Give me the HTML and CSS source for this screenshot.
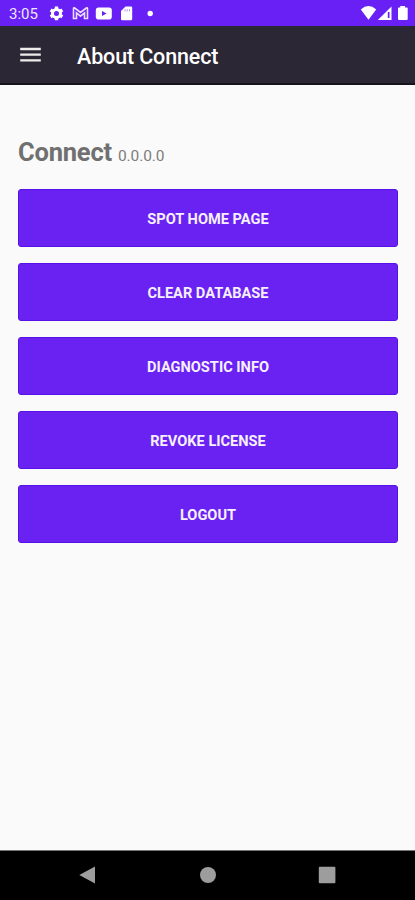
FILE: index.html
```html
<!DOCTYPE html>
<html lang="en">
<head>
<meta charset="utf-8">
<title>About Connect</title>
<link rel="stylesheet" href="styles.css">
</head>
<body>
<div class="status">
  <span class="time">3:05</span>
  <svg class="status-icons" width="106" height="16" viewBox="0 0 106 16" fill="#fff">
    <g transform="translate(7.5 8.4)">
      <circle r="4" fill="none" stroke="#fff" stroke-width="3"/>
      <path d="M0-6.8V-4M0 6.8V4M5.9-3.4 3.5-2M-5.9 3.4-3.5 2M5.9 3.4 3.5 2M-5.9-3.4-3.5-2" stroke="#fff" stroke-width="3.4"/>
    </g>
    <path d="M24.5 13.5V3.5Q24.5 2.3 25.7 3L31.5 7.5 37.3 3Q38.5 2.3 38.5 3.5V13.5H35.5V8L31.5 11.2 27.5 8V13.5Z" fill="none" stroke="#eadcff" stroke-width="1.6"/>
    <rect x="46.8" y="2.6" width="16" height="12" rx="2.8"/>
    <path d="M53 5.9 57.6 8.5 53 11.1Z" fill="#6820f4"/>
    <path d="M76.5 1.5H82Q83.2 1.5 83.2 2.7V14Q83.2 15.2 82 15.2H73.2Q72 15.2 72 14V6Z"/>
    <path d="M76 4V6.5M78.2 4V6.5M80.5 4V6.5" stroke="#b999f8" stroke-width="1"/>
    <circle cx="101.2" cy="8.5" r="2.7"/>
  </svg>
  <svg class="signals" width="50" height="16" viewBox="0 0 50 16" fill="#fff">
    <path d="M.8 4.4Q8.5-2.2 16.2 4.4L8.5 14.8Z"/>
    <path d="M17.8 15 31.5 1.5V15Z"/>
    <path d="M27.8 7V13H29.5V7Z" fill="#6820f4"/>
    <path d="M40.3 1H45V2.5H47Q47.7 2.5 47.7 3.3V14Q47.7 15 46.7 15H39Q38 15 38 14V3.3Q38 2.5 38.7 2.5H40.3Z"/>
  </svg>
</div>
<header class="appbar">
  <svg class="menu" width="22" height="16" viewBox="0 0 22 16"><path d="M.2 2H20.8M.2 7.7H20.8M.2 13.4H20.8" stroke="#eeede9" stroke-width="2.3"/></svg>
  <h1 class="title">About Connect</h1>
</header>
<main class="content">
  <div class="product"><span class="name">Connect</span><span class="version">0.0.0.0</span></div>
  <div class="actions">
    <button class="action"><span class="label">SPOT HOME PAGE</span></button>
    <button class="action"><span class="label">CLEAR DATABASE</span></button>
    <button class="action"><span class="label">DIAGNOSTIC INFO</span></button>
    <button class="action"><span class="label">REVOKE LICENSE</span></button>
    <button class="action"><span class="label">LOGOUT</span></button>
  </div>
</main>
<nav class="navbar">
  <svg width="18" height="18" viewBox="0 0 18 18"><path d="M.3 9 16 .5V17.5Z" fill="#9d9d9d"/></svg>
  <svg width="18" height="18" viewBox="0 0 18 18"><circle cx="9" cy="9" r="8" fill="#9d9d9d"/></svg>
  <svg width="18" height="18" viewBox="0 0 18 18"><rect x=".8" y=".7" width="16.6" height="16.6" rx="1" fill="#9d9d9d"/></svg>
</nav>
</body>
</html>
```
FILE: styles.css
```css
* { box-sizing: border-box; }
body {
  margin: 0;
  height: 900px;
  display: flex;
  flex-direction: column;
  overflow: hidden;
  background: #fafafa;
  font-family: Roboto, sans-serif;
}
.status {
  height: 26px;
  flex: none;
  display: flex;
  align-items: center;
  padding: 0 5px 0 9px;
  background: #6820f4;
  color: #efe6ff;
}
.time {
  width: 40px;
  font-size: 15px;
  line-height: 18px;
  padding-top: 2px;
}
.signals { margin-left: auto; }
.appbar {
  height: 59px;
  flex: none;
  display: flex;
  align-items: center;
  padding: 0 20px;
  background: #2c2734;
  border-bottom: 2px solid #17131d;
  color: #fff;
}
.menu { flex: none; }
.title {
  margin: 4px 0 0 35px;
  font-size: 21.5px;
  line-height: 26px;
  font-weight: 500;
  letter-spacing: -0.13px;
}
.content {
  flex: 1;
  padding: 51px 17px 0 18px;
}
.product {
  height: 53px;
  line-height: 32px;
  color: #707070;
}
.name {
  font-size: 25.5px;
  font-weight: 700;
  letter-spacing: -0.2px;
}
.version {
  margin-left: 6px;
  font-size: 15.5px;
  letter-spacing: -0.1px;
  color: #7d7d7d;
}
.actions {
  display: grid;
  gap: 16px;
}
.action {
  height: 58px;
  padding: 2px 0 0;
  border: 1px solid #5710e6;
  border-radius: 3px;
  background: #6a22f3;
  color: #f6f0ff;
  font: 700 14.6px/20px Roboto, sans-serif;
}
.navbar {
  height: 50px;
  flex: none;
  display: flex;
  justify-content: space-between;
  align-items: center;
  padding: 0 79px 1px;
  border-top: 1px solid #777;
  background: #000;
}
```
